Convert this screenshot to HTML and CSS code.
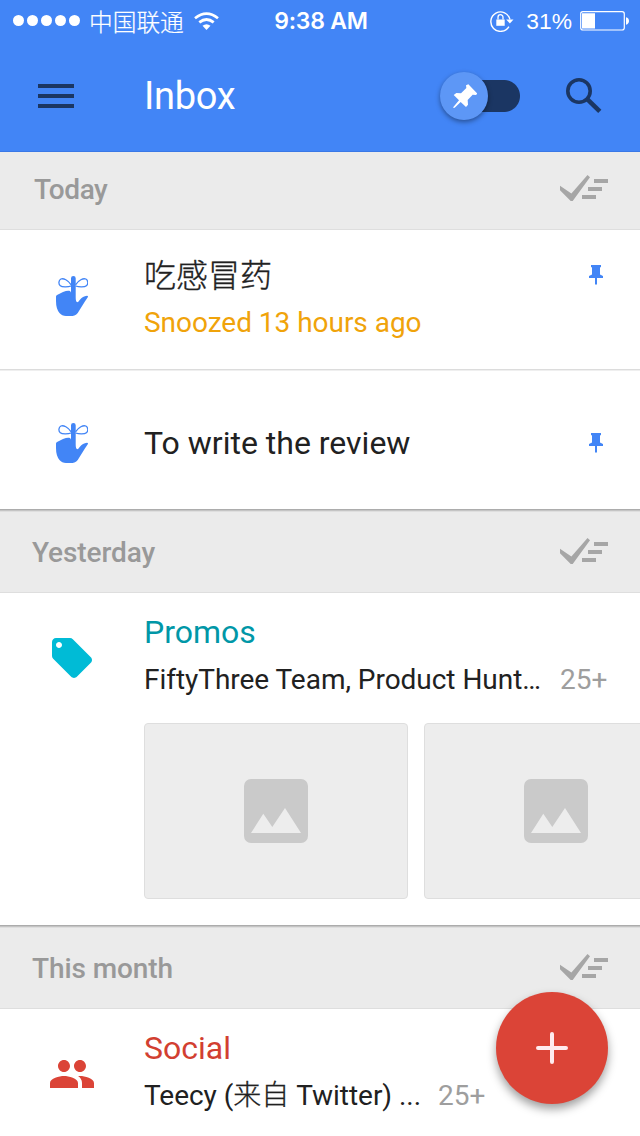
FILE: index.html
```html
<!DOCTYPE html>
<html lang="en">
<head>
<meta charset="utf-8">
<title>Inbox</title>
<link rel="stylesheet" href="styles.css">
</head>
<body>
<svg class="defs" aria-hidden="true">
  <symbol id="done-all" viewBox="0 0 48 26">
    <path d="M0 10.800v4.400L10.700 26h2L30 2.300 27.500 0 11.400 18.400z"/>
    <path d="M34 4h14v4H34zM28 12h14v4H28zM22 20h14v4H22z"/>
  </symbol>
  <symbol id="pin" viewBox="0 0 14 20">
    <path d="M2 0h10v2l-1 .4v7l3 1.600v2H8v6l-1 1-1-1v-6H0v-2l3-1.600v-7L2 2z"/>
  </symbol>
  <symbol id="reminder" viewBox="0 0 32 40">
    <path d="M15 2.300a2.350 2.300 0 0 1 4.700 0V22q.1 4 1.500 4.200 1 0 2.500-2.200 3-4 7.300-4.300 1.300 0 .9 1.400-1.400 2.200-3 4.500l-5.300 8.500Q20.500 40 16.500 40H10q-4 0-6.500-3Q0 33 0 25v-4.500q0-.8 1-1.400l6-3q4-1.800 6.300-1.300 1.100.4 1.700 1.600z"/>
    <path class="reminder-bow" d="M15.200 8.800C12 4 7.500 2 4.900 3 2.600 4.200 2.200 8 4.300 9.800c1.800 1.500 8 1.200 10.900.2M19.500 8.800C22.700 4 27.200 2 29.800 3c2.300 1.200 2.700 5 .6 6.800-1.800 1.500-8 1.200-10.900.2"/>
  </symbol>
  <symbol id="image" viewBox="0 0 64 64">
    <path fill-rule="evenodd" d="M7 0h50a7 7 0 0 1 7 7v50a7 7 0 0 1-7 7H7a7 7 0 0 1-7-7V7a7 7 0 0 1 7-7zM7 54h50L41 29 28.300 48l-9-13.300z"/>
  </symbol>
</svg>

<div class="screen">
  <header class="appbar">
    <div class="status">
      <div class="status-left">
        <div class="signal"><i></i><i></i><i></i><i></i><i></i></div>
        <span class="carrier">中国联通</span>
        <svg class="wifi" viewBox="0 0 25 18"><path d="M12.500 18l-4-4.200q4-3.300 8 0z" fill="#fff"/><path d="M5.300 10.400q7.200-5.800 14.400 0M1 6.200q11.500-9.300 23 0" fill="none" stroke="#fff" stroke-width="2.700"/></svg>
      </div>
      <span class="time">9:38 AM</span>
      <div class="status-right">
        <svg class="lock" viewBox="0 0 24 22"><path d="M18.900 16.600A9.700 9.700 0 1 1 20 9.500" fill="none" stroke="#fff" stroke-width="1.400"/><path d="M16.200 9.400h7.300l-3.600 4.200z" fill="#fff"/><path d="M6.300 9.500h8.400v6.300H6.300z" fill="#fff"/><path d="M8 9.500V7.200a2.500 2.500 0 0 1 5 0v2.300" fill="none" stroke="#fff" stroke-width="1.300"/></svg>
        <span class="percent">31%</span>
        <svg class="battery" viewBox="0 0 49 20"><rect x=".7" y=".7" width="43.600" height="18.300" rx="2.200" fill="none" stroke="#fff" stroke-width="1.200"/><path d="M2 2.300h13v15.100H2zM46 6.300q3 .8 3 3.700t-3 3.700z" fill="#fff"/></svg>
      </div>
    </div>
    <div class="toolbar">
      <div class="menu"><i></i><i></i><i></i></div>
      <h1 class="title">Inbox</h1>
      <div class="toggle">
        <div class="thumb">
          <svg class="thumb-pin" viewBox="99 251 74 73"><path d="M145 252l27 28-4 4-10-1-15 16 1 14-6 7-16-15-18 17-4 1 0-3 17-20-16-16 8-6 14 1 16-16-1-8z"/></svg>
        </div>
      </div>
      <svg class="search" viewBox="0 0 36 36"><circle cx="13" cy="13" r="11.200"/><path d="M21.200 21.200l12.600 12.200" stroke-width="4.600"/></svg>
    </div>
  </header>

  <main>
    <section>
      <div class="section-head first"><h2>Today</h2><svg class="sweep"><use href="#done-all"/></svg></div>
      <article class="row snoozed">
        <svg class="reminder"><use href="#reminder"/></svg>
        <div class="body">
          <div class="subject cjk">吃感冒药</div>
          <div class="detail amber">Snoozed 13 hours ago</div>
        </div>
        <svg class="pin"><use href="#pin"/></svg>
      </article>
      <article class="row single">
        <svg class="reminder"><use href="#reminder"/></svg>
        <div class="body"><div class="subject">To write the review</div></div>
        <svg class="pin"><use href="#pin"/></svg>
      </article>
    </section>

    <section>
      <div class="section-head"><h2>Yesterday</h2><svg class="sweep"><use href="#done-all"/></svg></div>
      <article class="row bundle promos">
        <svg class="tag" viewBox="2 2 20 20"><path d="M21.410 11.580l-9-9C12.050 2.220 11.550 2 11 2H4c-1.100 0-2 .9-2 2v7c0 .55.22 1.050.59 1.420l9 9c.36.36.86.58 1.410.58.55 0 1.050-.22 1.410-.59l7-7c.37-.36.59-.86.59-1.410 0-.55-.23-1.060-.59-1.420zM5.500 7C4.670 7 4 6.330 4 5.500S4.670 4 5.500 4 7 4.670 7 5.500 6.330 7 5.500 7z"/></svg>
        <div class="body">
          <div class="subject teal">Promos</div>
          <div class="detail"><span class="senders">FiftyThree Team, Product Hunt…</span><span class="count">25+</span></div>
          <div class="cards">
            <div class="card"><svg class="placeholder"><use href="#image"/></svg></div>
            <div class="card"><svg class="placeholder"><use href="#image"/></svg></div>
          </div>
        </div>
      </article>
    </section>

    <section>
      <div class="section-head"><h2>This month</h2><svg class="sweep"><use href="#done-all"/></svg></div>
      <article class="row bundle social">
        <svg class="people" viewBox="1 5 22 14"><path d="M16 11c1.660 0 2.990-1.340 2.990-3S17.660 5 16 5c-1.660 0-3 1.340-3 3s1.340 3 3 3zm-8 0c1.660 0 2.990-1.340 2.990-3S9.660 5 8 5C6.340 5 5 6.340 5 8s1.340 3 3 3zm0 2c-2.330 0-7 1.170-7 3.500V19h14v-2.500c0-2.330-4.670-3.500-7-3.500zm8 0c-.29 0-.62.02-.97.05 1.160.84 1.970 1.970 1.970 3.450V19h6v-2.500c0-2.330-4.670-3.500-7-3.500z"/></svg>
        <div class="body">
          <div class="subject red">Social</div>
          <div class="detail"><span class="senders">Teecy (<span class="light">来自</span> Twitter) ...</span><span class="count">25+</span></div>
        </div>
      </article>
    </section>
  </main>

  <button class="fab" aria-label="Compose"><svg class="plus" viewBox="0 0 32 32"><path d="M16 2v28M2 16h28"/></svg></button>
</div>
</body>
</html>
```
FILE: styles.css
```css
* { box-sizing: border-box; }
body { margin: 0; font-family: Roboto, "Noto Sans CJK SC", sans-serif; color: #212121; background: #fff; }
svg { display: block; flex: none; }
h1, h2 { margin: 0; font-weight: 400; }
.defs { position: absolute; width: 0; height: 0; }
.screen { position: relative; width: 640px; height: 1136px; overflow: hidden; background: #fff; }

.appbar { height: 152px; background: #4285f6; border-bottom: 1px solid #3a78e6; color: #fff; }
.status { display: grid; grid-template-columns: 1fr auto 1fr; height: 41px; padding: 0 11px 0 13px; align-items: center; font-family: "Liberation Sans", "Noto Sans CJK SC", sans-serif; font-size: 24px; line-height: 40px; white-space: nowrap; }
.status-left, .status-right { display: flex; align-items: center; }
.status-right { justify-content: flex-end; }
.signal { display: flex; gap: 3px; }
.signal i { width: 11px; height: 11px; border-radius: 50%; background: #fff; }
.carrier { margin-left: 9px; font-family: "Noto Sans CJK SC", sans-serif; font-weight: 300; font-size: 23.700px; line-height: 38px; -webkit-text-stroke: .2px #fff; }
.wifi { width: 25px; height: 18px; margin-left: 10px; }
.time { font-family: Inter, sans-serif; font-weight: 600; font-size: 23px; letter-spacing: -.25px; }
.lock { width: 24px; height: 22px; margin-right: 12px; }
.percent { margin-right: 8px; font-size: 22.800px; }
.battery { width: 49px; height: 20px; }

.toolbar { display: flex; align-items: center; height: 110px; padding: 0 38px; }
.menu { display: flex; flex-direction: column; gap: 6px; width: 36px; }
.menu i { height: 4px; background: #1b3663; }
.title { flex: 1; margin-left: 70px; font-size: 38px; line-height: 48px; letter-spacing: -.3px; }
.toggle { width: 80px; height: 48px; margin-right: 46px; background: linear-gradient(#1b3663, #1b3663) 24px 8px / 40px 32px no-repeat, radial-gradient(circle at 64px 24px, #1b3663 15.500px, transparent 16.500px); }
.thumb { display: flex; align-items: center; justify-content: center; width: 48px; height: 48px; border-radius: 50%; background: #5d97f6; box-shadow: 0 2px 5px rgba(0, 0, 0, .4); }
.thumb-pin { width: 24.700px; height: 24.300px; margin-left: 2px; fill: #fff; }
.search { width: 36px; height: 36px; fill: none; stroke: #1b3663; stroke-width: 3.600; }

.section-head { display: flex; align-items: center; justify-content: space-between; height: 84px; padding: 0 32px; background: linear-gradient(#acacac 0 1px, #c4c4c4 1px 2px, #dedede 2px 3px, #ebebeb 3px); border-bottom: 1px solid #dedede; }
.section-head.first { height: 78px; padding: 0 32px 5px 34px; background: #ebebeb; }
.section-head h2 { padding-top: 4px; font-size: 28px; line-height: 36px; font-weight: 500; letter-spacing: -.1px; color: #999; }
.section-head.first h2 { letter-spacing: -.4px; }
.sweep { width: 48px; height: 26px; fill: #a6a6a6; }

.row { display: flex; align-items: flex-start; }
.body { flex: 1; min-width: 0; }
.subject { font-size: 32px; line-height: 40px; }
.detail { display: flex; margin-top: 10px; font-size: 28px; line-height: 36px; letter-spacing: -.03px; white-space: nowrap; }
.cjk { height: 40px; font-family: "Noto Sans CJK SC", sans-serif; font-weight: 300; line-height: 36px; -webkit-text-stroke: .35px #212121; }
.light { font-weight: 300; -webkit-text-stroke: .3px #212121; }
.amber { color: #f0a30a; }
.teal { color: #0097a7; }
.red { color: #d23f31; }
.count { color: #9e9e9e; }
.reminder { width: 32px; height: 40px; margin: 0 56px; fill: #4285f6; }
.reminder-bow { fill: none; stroke: #4285f6; stroke-width: 1.300; }
.pin { width: 14px; height: 20px; margin-right: 37px; fill: #4285f6; }
.snoozed { height: 141px; padding-top: 25px; background: linear-gradient(#dcdcdc, #dcdcdc) 0 139px / 100% 1px no-repeat, linear-gradient(#efefef, #efefef) 0 140px / 100% 1px no-repeat; }
.snoozed .reminder { margin-top: 21px; }
.snoozed .pin { margin-top: 10px; }
.single { height: 138px; align-items: center; padding-top: 6px; }
.bundle { padding-top: 19px; }
.promos { height: 332px; }
.tag { width: 40px; height: 40px; margin: 26px 52px 0; fill: #00bbd6; }
.promos .count { margin-left: 19px; }
.cards { display: flex; gap: 16px; margin-top: 25px; overflow: hidden; }
.card { display: flex; flex: none; align-items: center; justify-content: center; width: 264px; height: 176px; border: 1px solid #dedede; border-radius: 4px; background: #ededed; }
.placeholder { width: 64px; height: 64px; fill: #cacaca; }
.people { width: 44px; height: 28px; margin: 32px 50px 0; fill: #db4437; }
.social .count { margin-left: 17px; }

.fab { position: absolute; right: 32px; bottom: 32px; display: flex; align-items: center; justify-content: center; width: 112px; height: 112px; padding: 0; border: 0; border-radius: 50%; background: #db4437; box-shadow: 0 5px 10px rgba(0, 0, 0, .38); }
.plus { width: 32px; height: 32px; fill: none; stroke: #ffebee; stroke-width: 4; stroke-linecap: round; }
```
